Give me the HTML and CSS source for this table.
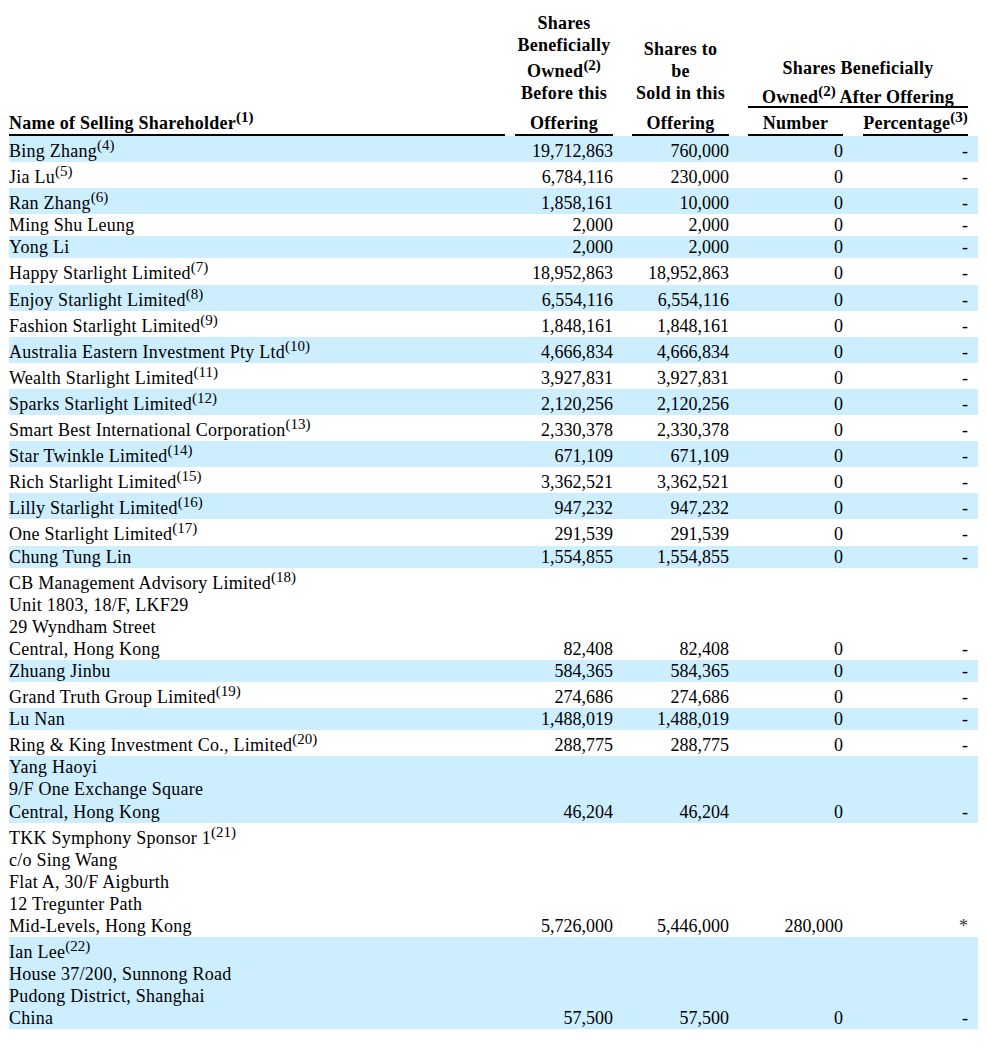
FILE: index.html
```html
<!DOCTYPE html>
<html lang="en">
<head>
<meta charset="utf-8">
<title>Selling Shareholders</title>
<link rel="stylesheet" href="styles.css">
</head>
<body>
<div class="page">
<table class="holders">
  <colgroup>
    <col class="c-name"><col class="c-sp10"><col class="c-2"><col class="c-sp19"><col class="c-3"><col class="c-sp19"><col class="c-4"><col class="c-sp20"><col class="c-5"><col class="c-sp10">
  </colgroup>
  <thead>
    <tr>
      <th class="h-name rule" rowspan="2">Name of Selling Shareholder<sup>(1)</sup></th>
      <th rowspan="2"></th>
      <th class="h-top">Shares<br>Beneficially<br>Owned<sup>(2)</sup><br>Before this</th>
      <th></th>
      <th class="h-top">Shares to<br>be<br>Sold in this</th>
      <th></th>
      <th class="rule h-group" colspan="3"><div class="g1">Shares Beneficially</div><div class="g2">Owned<sup>(2)</sup> After Offering</div></th>
      <th rowspan="2"></th>
    </tr>
    <tr>
      <th class="rule">Offering</th>
      <th></th>
      <th class="rule">Offering</th>
      <th></th>
      <th class="rule">Number</th>
      <th></th>
      <th class="rule">Percentage<sup>(3)</sup></th>
    </tr>
  </thead>
  <tbody>
    <tr class="shade"><td class="name">Bing Zhang<sup>(4)</sup></td><td></td><td class="num">19,712,863</td><td></td><td class="num">760,000</td><td></td><td class="num">0</td><td></td><td class="num">-</td><td></td></tr>
    <tr><td class="name">Jia Lu<sup>(5)</sup></td><td></td><td class="num">6,784,116</td><td></td><td class="num">230,000</td><td></td><td class="num">0</td><td></td><td class="num">-</td><td></td></tr>
    <tr class="shade"><td class="name">Ran Zhang<sup>(6)</sup></td><td></td><td class="num">1,858,161</td><td></td><td class="num">10,000</td><td></td><td class="num">0</td><td></td><td class="num">-</td><td></td></tr>
    <tr><td class="name">Ming Shu Leung</td><td></td><td class="num">2,000</td><td></td><td class="num">2,000</td><td></td><td class="num">0</td><td></td><td class="num">-</td><td></td></tr>
    <tr class="shade"><td class="name">Yong Li</td><td></td><td class="num">2,000</td><td></td><td class="num">2,000</td><td></td><td class="num">0</td><td></td><td class="num">-</td><td></td></tr>
    <tr><td class="name">Happy Starlight Limited<sup>(7)</sup></td><td></td><td class="num">18,952,863</td><td></td><td class="num">18,952,863</td><td></td><td class="num">0</td><td></td><td class="num">-</td><td></td></tr>
    <tr class="shade"><td class="name">Enjoy Starlight Limited<sup>(8)</sup></td><td></td><td class="num">6,554,116</td><td></td><td class="num">6,554,116</td><td></td><td class="num">0</td><td></td><td class="num">-</td><td></td></tr>
    <tr><td class="name">Fashion Starlight Limited<sup>(9)</sup></td><td></td><td class="num">1,848,161</td><td></td><td class="num">1,848,161</td><td></td><td class="num">0</td><td></td><td class="num">-</td><td></td></tr>
    <tr class="shade"><td class="name">Australia Eastern Investment Pty Ltd<sup>(10)</sup></td><td></td><td class="num">4,666,834</td><td></td><td class="num">4,666,834</td><td></td><td class="num">0</td><td></td><td class="num">-</td><td></td></tr>
    <tr><td class="name">Wealth Starlight Limited<sup>(11)</sup></td><td></td><td class="num">3,927,831</td><td></td><td class="num">3,927,831</td><td></td><td class="num">0</td><td></td><td class="num">-</td><td></td></tr>
    <tr class="shade"><td class="name">Sparks Starlight Limited<sup>(12)</sup></td><td></td><td class="num">2,120,256</td><td></td><td class="num">2,120,256</td><td></td><td class="num">0</td><td></td><td class="num">-</td><td></td></tr>
    <tr><td class="name">Smart Best International Corporation<sup>(13)</sup></td><td></td><td class="num">2,330,378</td><td></td><td class="num">2,330,378</td><td></td><td class="num">0</td><td></td><td class="num">-</td><td></td></tr>
    <tr class="shade"><td class="name">Star Twinkle Limited<sup>(14)</sup></td><td></td><td class="num">671,109</td><td></td><td class="num">671,109</td><td></td><td class="num">0</td><td></td><td class="num">-</td><td></td></tr>
    <tr><td class="name">Rich Starlight Limited<sup>(15)</sup></td><td></td><td class="num">3,362,521</td><td></td><td class="num">3,362,521</td><td></td><td class="num">0</td><td></td><td class="num">-</td><td></td></tr>
    <tr class="shade"><td class="name">Lilly Starlight Limited<sup>(16)</sup></td><td></td><td class="num">947,232</td><td></td><td class="num">947,232</td><td></td><td class="num">0</td><td></td><td class="num">-</td><td></td></tr>
    <tr><td class="name">One Starlight Limited<sup>(17)</sup></td><td></td><td class="num">291,539</td><td></td><td class="num">291,539</td><td></td><td class="num">0</td><td></td><td class="num">-</td><td></td></tr>
    <tr class="shade"><td class="name">Chung Tung Lin</td><td></td><td class="num">1,554,855</td><td></td><td class="num">1,554,855</td><td></td><td class="num">0</td><td></td><td class="num">-</td><td></td></tr>
    <tr><td class="name">CB Management Advisory Limited<sup>(18)</sup><br>Unit 1803, 18/F, LKF29<br>29 Wyndham Street<br>Central, Hong Kong</td><td></td><td class="num">82,408</td><td></td><td class="num">82,408</td><td></td><td class="num">0</td><td></td><td class="num">-</td><td></td></tr>
    <tr class="shade"><td class="name">Zhuang Jinbu</td><td></td><td class="num">584,365</td><td></td><td class="num">584,365</td><td></td><td class="num">0</td><td></td><td class="num">-</td><td></td></tr>
    <tr><td class="name">Grand Truth Group Limited<sup>(19)</sup></td><td></td><td class="num">274,686</td><td></td><td class="num">274,686</td><td></td><td class="num">0</td><td></td><td class="num">-</td><td></td></tr>
    <tr class="shade"><td class="name">Lu Nan</td><td></td><td class="num">1,488,019</td><td></td><td class="num">1,488,019</td><td></td><td class="num">0</td><td></td><td class="num">-</td><td></td></tr>
    <tr><td class="name">Ring &amp; King Investment Co., Limited<sup>(20)</sup></td><td></td><td class="num">288,775</td><td></td><td class="num">288,775</td><td></td><td class="num">0</td><td></td><td class="num">-</td><td></td></tr>
    <tr class="shade"><td class="name">Yang Haoyi<br>9/F One Exchange Square<br>Central, Hong Kong</td><td></td><td class="num">46,204</td><td></td><td class="num">46,204</td><td></td><td class="num">0</td><td></td><td class="num">-</td><td></td></tr>
    <tr><td class="name">TKK Symphony Sponsor 1<sup>(21)</sup><br>c/o Sing Wang<br>Flat A, 30/F Aigburth<br>12 Tregunter Path<br>Mid-Levels, Hong Kong</td><td></td><td class="num">5,726,000</td><td></td><td class="num">5,446,000</td><td></td><td class="num">280,000</td><td></td><td class="num star">*</td><td></td></tr>
    <tr class="shade"><td class="name">Ian Lee<sup>(22)</sup><br>House 37/200, Sunnong Road<br>Pudong District, Shanghai<br>China</td><td></td><td class="num">57,500</td><td></td><td class="num">57,500</td><td></td><td class="num">0</td><td></td><td class="num">-</td><td></td></tr>
  </tbody>
</table>
</div>
</body>
</html>
```

FILE: styles.css
```css
body {
  margin: 0;
  background: #ffffff;
  color: #000000;
  font-family: "Liberation Serif", "Times New Roman", serif;
  font-size: 18px;
}

.page {
  padding: 12px 0 0 9px;
}

.holders {
  border-collapse: separate;
  border-spacing: 0;
  table-layout: fixed;
  width: 969px;
}

.c-name { width: 496px; }
.c-sp10 { width: 10px; }
.c-2 { width: 98px; }
.c-sp19 { width: 19px; }
.c-3 { width: 97px; }
.c-4 { width: 95px; }
.c-sp20 { width: 20px; }
.c-5 { width: 105px; }

.holders th,
.holders td {
  padding: 0;
  line-height: 22px;
  vertical-align: bottom;
}

.holders tbody td {
  line-height: 22.1px;
}

.holders th {
  font-weight: bold;
  text-align: center;
  white-space: nowrap;
  letter-spacing: 0.25px;
}

.holders .h-name {
  text-align: left;
}

.holders .h-top {
  padding-bottom: 4px;
}

.holders .h-group .g2 {
  margin-top: 3px;
  line-height: 18px;
}

.rule {
  border-bottom: 2px solid #000000;
}

.holders td.name {
  text-align: left;
  letter-spacing: 0.25px;
}

.holders td.num {
  text-align: right;
  white-space: nowrap;
}

.holders td.star {
  color: #333333;
}

.shade td {
  background: #cceeff;
}

sup {
  font-size: 15px;
  line-height: 18px;
  vertical-align: 7px;
  letter-spacing: 0;
}
```
